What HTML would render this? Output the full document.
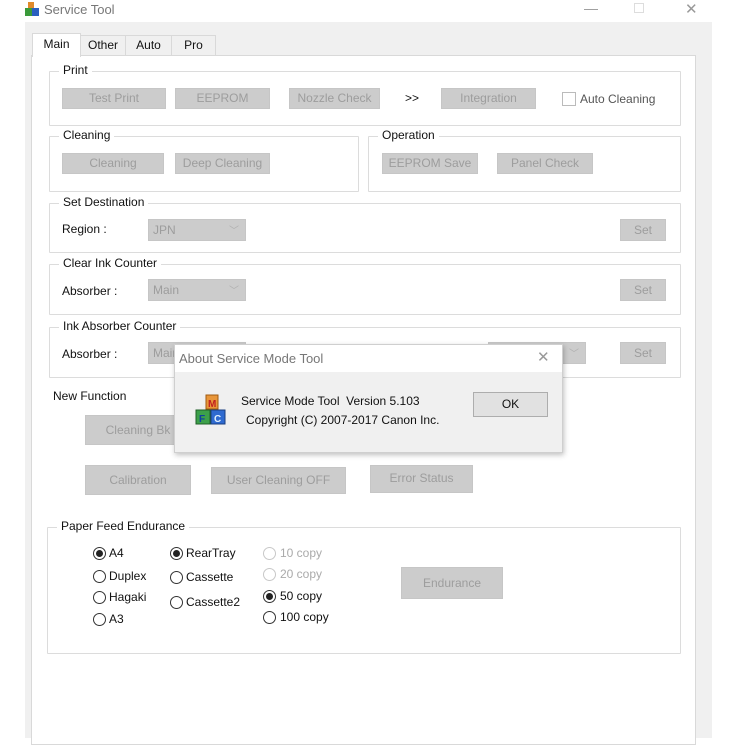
<!DOCTYPE html>
<html><head><meta charset="utf-8"><style>
*{margin:0;padding:0;box-sizing:border-box}
body{width:738px;height:738px;background:#fff;position:relative;overflow:hidden;font-family:"Liberation Sans","Noto Sans CJK JP",sans-serif;font-size:12px;color:#111}
.a{position:absolute;white-space:nowrap}
.btn{position:absolute;background:#cccccc;border:1px solid #c6c6c6;color:#9d9d9d;text-align:center;font-size:12px}
.grp{position:absolute;border:1px solid #dcdcdc;border-radius:1px}
.lbl{position:absolute;background:#fff;padding:0 4px;font-size:12px;top:-9px;left:9px}
.cmb{position:absolute;background:#cccccc;border:1px solid #c6c6c6;color:#9d9d9d;font-size:12px;padding-left:4px}
.cmb i{position:absolute;right:6px;top:2px;font-style:normal;color:#b0b0b0;font-size:10px}
.tab{position:absolute;border:1px solid #d9d9d9;background:#f0f0f0;font-size:12px;text-align:center}
.r{position:absolute;width:13px;height:13px;border:1px solid #333;border-radius:50%;background:#fff}
.r.on::after{content:"";position:absolute;left:2px;top:2px;width:7px;height:7px;border-radius:50%;background:#222}
.r.dis{border-color:#c8c8c8}
</style></head><body>
<svg class="a" style="left:25px;top:2px" width="15" height="15"><rect x="3" y="0" width="6" height="6" fill="#e08a2a"/><rect x="0" y="6" width="7" height="8" fill="#3a9a3a"/><rect x="7" y="6" width="7" height="8" fill="#2a5fc0"/></svg>
<div class="a" style="left:44px;top:2px;font-size:13px;color:#777">Service Tool</div>
<div class="a" style="left:584px;top:0px;font-size:14px;color:#999">—</div>
<div class="a" style="left:634px;top:3px;width:10px;height:10px;border:1px solid #ddd"></div>
<div class="a" style="left:685px;top:0px;font-size:15px;color:#999">✕</div>
<div class="a" style="left:25px;top:22px;width:687px;height:716px;background:#f0f0f0"></div>
<div class="a" style="left:31px;top:55px;width:665px;height:690px;background:#fff;border:1px solid #d9d9d9"></div>
<div class="tab" style="left:80px;top:35px;width:46px;height:21px;line-height:19px">Other</div>
<div class="tab" style="left:125px;top:35px;width:47px;height:21px;line-height:19px">Auto</div>
<div class="tab" style="left:171px;top:35px;width:45px;height:21px;line-height:19px">Pro</div>
<div class="tab" style="left:32px;top:33px;width:49px;height:24px;line-height:20px;background:#fff;border-bottom:none">Main</div>
<div class="grp" style="left:49px;top:71px;width:632px;height:55px"><span class="lbl">Print</span></div>
<div class="btn" style="left:62px;top:88px;width:104px;height:21px;line-height:19px">Test Print</div>
<div class="btn" style="left:175px;top:88px;width:95px;height:21px;line-height:19px">EEPROM</div>
<div class="btn" style="left:289px;top:88px;width:91px;height:21px;line-height:19px">Nozzle Check</div>
<div class="a" style="left:405px;top:91px;font-size:12px">&gt;&gt;</div>
<div class="btn" style="left:441px;top:88px;width:95px;height:21px;line-height:19px">Integration</div>
<div class="a" style="left:562px;top:92px;width:14px;height:14px;border:1px solid #bbb"></div>
<div class="a" style="left:580px;top:92px;font-size:12px;color:#555">Auto Cleaning</div>
<div class="grp" style="left:49px;top:136px;width:310px;height:56px"><span class="lbl">Cleaning</span></div>
<div class="btn" style="left:62px;top:153px;width:102px;height:21px;line-height:19px">Cleaning</div>
<div class="btn" style="left:175px;top:153px;width:95px;height:21px;line-height:19px">Deep Cleaning</div>
<div class="grp" style="left:368px;top:136px;width:313px;height:56px"><span class="lbl">Operation</span></div>
<div class="btn" style="left:382px;top:153px;width:96px;height:21px;line-height:19px">EEPROM Save</div>
<div class="btn" style="left:497px;top:153px;width:96px;height:21px;line-height:19px">Panel Check</div>
<div class="grp" style="left:49px;top:203px;width:632px;height:50px"><span class="lbl">Set Destination</span></div>
<div class="a" style="left:62px;top:222px;font-size:12px">Region :</div>
<div class="cmb" style="left:148px;top:219px;width:98px;height:22px;line-height:20px">JPN<i>﹀</i></div>
<div class="btn" style="left:620px;top:219px;width:46px;height:22px;line-height:20px">Set</div>
<div class="grp" style="left:49px;top:264px;width:632px;height:51px"><span class="lbl">Clear Ink Counter</span></div>
<div class="a" style="left:62px;top:284px;font-size:12px">Absorber :</div>
<div class="cmb" style="left:148px;top:279px;width:98px;height:22px;line-height:20px">Main<i>﹀</i></div>
<div class="btn" style="left:620px;top:279px;width:46px;height:22px;line-height:20px">Set</div>
<div class="grp" style="left:49px;top:327px;width:632px;height:51px"><span class="lbl">Ink Absorber Counter</span></div>
<div class="a" style="left:62px;top:347px;font-size:12px">Absorber :</div>
<div class="cmb" style="left:148px;top:342px;width:98px;height:22px;line-height:20px">Main<i>﹀</i></div>
<div class="cmb" style="left:488px;top:342px;width:98px;height:22px;line-height:20px"><i>﹀</i></div>
<div class="btn" style="left:620px;top:342px;width:46px;height:22px;line-height:20px">Set</div>
<div class="a" style="left:53px;top:389px;font-size:12px">New Function</div>
<div class="btn" style="left:85px;top:415px;width:106px;height:30px;line-height:28px">Cleaning Bk</div>
<div class="btn" style="left:85px;top:465px;width:106px;height:30px;line-height:28px">Calibration</div>
<div class="btn" style="left:211px;top:467px;width:135px;height:27px;line-height:25px">User Cleaning OFF</div>
<div class="btn" style="left:370px;top:465px;width:103px;height:28px;line-height:24px">Error Status</div>
<div class="grp" style="left:47px;top:527px;width:634px;height:127px"><span class="lbl">Paper Feed Endurance</span></div>
<div class="r on" style="left:93px;top:547px"></div><div class="a" style="left:109px;top:546px">A4</div>
<div class="r" style="left:93px;top:570px"></div><div class="a" style="left:109px;top:569px">Duplex</div>
<div class="r" style="left:93px;top:591px"></div><div class="a" style="left:109px;top:590px">Hagaki</div>
<div class="r" style="left:93px;top:613px"></div><div class="a" style="left:109px;top:612px">A3</div>
<div class="r on" style="left:170px;top:547px"></div><div class="a" style="left:186px;top:546px">RearTray</div>
<div class="r" style="left:170px;top:571px"></div><div class="a" style="left:186px;top:570px">Cassette</div>
<div class="r" style="left:170px;top:596px"></div><div class="a" style="left:186px;top:595px">Cassette2</div>
<div class="r dis" style="left:263px;top:547px"></div><div class="a" style="left:280px;top:546px;color:#aaa">10 copy</div>
<div class="r dis" style="left:263px;top:568px"></div><div class="a" style="left:280px;top:567px;color:#aaa">20 copy</div>
<div class="r on" style="left:263px;top:590px"></div><div class="a" style="left:280px;top:589px">50 copy</div>
<div class="r" style="left:263px;top:611px"></div><div class="a" style="left:280px;top:610px">100 copy</div>
<div class="btn" style="left:401px;top:567px;width:102px;height:32px;line-height:30px">Endurance</div>
<div class="a" style="left:174px;top:344px;width:389px;height:109px;background:#f0f0f0;border:1px solid #cfcfcf;box-shadow:1px 2px 5px rgba(0,0,0,.25)">
 <div style="position:absolute;left:0;top:0;width:387px;height:27px;background:#fff"></div>
 <div class="a" style="left:4px;top:6px;font-size:13px;color:#777">About Service Mode Tool</div>
 <div class="a" style="left:362px;top:3px;font-size:15px;color:#999">✕</div>
 <svg class="a" style="left:20px;top:48px" width="34" height="34"><rect x="11" y="2" width="12" height="14" fill="#e8963a" stroke="#a05a10"/><text x="13" y="14" font-size="10" font-weight="bold" fill="#c02020" font-family="Liberation Sans">M</text><rect x="1" y="17" width="14" height="14" fill="#3ca04a" stroke="#1f5f27"/><text x="4" y="29" font-size="10" font-weight="bold" fill="#1040a0" font-family="Liberation Sans">F</text><rect x="16" y="17" width="14" height="14" fill="#2f6ad0" stroke="#1a3e80"/><text x="19" y="29" font-size="10" font-weight="bold" fill="#e0f0ff" font-family="Liberation Sans">C</text></svg>
 <div class="a" style="left:66px;top:49px;font-size:12px">Service Mode Tool&nbsp; Version 5.103</div>
 <div class="a" style="left:71px;top:68px;font-size:12px">Copyright (C) 2007-2017 Canon Inc.</div>
 <div class="a" style="left:298px;top:47px;width:75px;height:25px;background:#e1e1e1;border:1px solid #adadad;text-align:center;line-height:23px;font-size:12px">OK</div>
</div>
</body></html>
